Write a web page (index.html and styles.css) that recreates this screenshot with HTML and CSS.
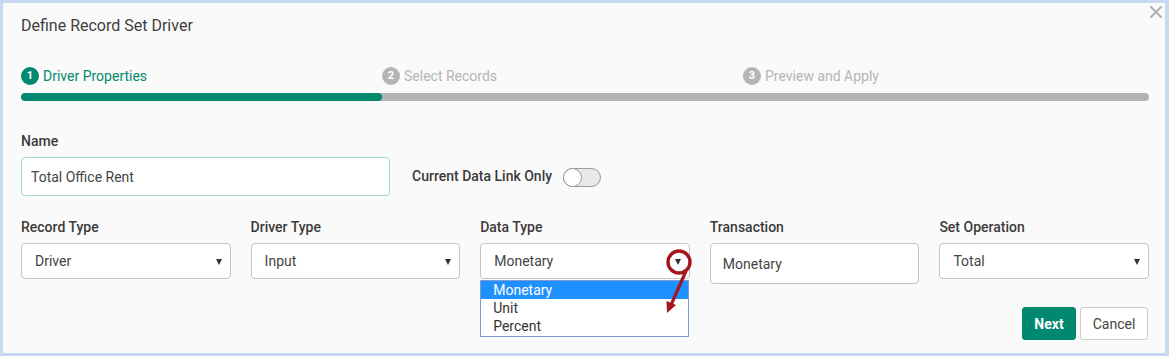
FILE: index.html
```html
<!DOCTYPE html>
<html lang="en">
<head>
  <meta charset="UTF-8">
  <title>Define Record Set Driver</title>
  <link rel="stylesheet" href="styles.css">
</head>
<body>
  <div class="dialog">
    <!-- Close button in the corner -->
    <button class="close-btn" aria-label="Close">
      <svg width="12" height="12" viewBox="0 0 12 12">
        <path d="M1 1 L11 11 M11 1 L1 11" stroke="#b3b3b3" stroke-width="2.2" stroke-linecap="round"/>
      </svg>
    </button>

    <h2 class="title">Define Record Set Driver</h2>

    <!-- Wizard steps -->
    <div class="steps">
      <div class="step active"><span class="step-num">1</span>Driver Properties</div>
      <div class="step"><span class="step-num">2</span>Select Records</div>
      <div class="step"><span class="step-num">3</span>Preview and Apply</div>
    </div>
    <div class="progress">
      <div class="progress-fill"></div>
    </div>

    <!-- Name row -->
    <div class="name-row">
      <div class="field name-field">
        <label class="field-label">Name</label>
        <input type="text" class="text-input name-input" value="Total Office Rent">
      </div>
      <span class="link-label">Current Data Link Only</span>
      <span class="toggle"><span class="toggle-knob"></span></span>
    </div>

    <!-- Driver settings -->
    <div class="settings-grid">
      <div class="field">
        <label class="field-label">Record Type</label>
        <div class="select-wrap">
          <select class="select-input"><option>Driver</option></select>
        </div>
      </div>
      <div class="field">
        <label class="field-label">Driver Type</label>
        <div class="select-wrap">
          <select class="select-input"><option>Input</option></select>
        </div>
      </div>
      <div class="field data-type">
        <label class="field-label">Data Type</label>
        <div class="select-wrap">
          <select class="select-input"><option>Monetary</option><option>Unit</option><option>Percent</option></select>
        </div>
        <ul class="option-list">
          <li class="selected">Monetary</li>
          <li>Unit</li>
          <li>Percent</li>
        </ul>
        <!-- Red callout over the dropdown arrow -->
        <svg class="callout" width="40" height="80" viewBox="0 0 40 80">
          <circle cx="19" cy="17" r="11" fill="none" stroke="#a3151f" stroke-width="3.4"/>
          <line x1="26" y1="26" x2="11" y2="60" stroke="#a3151f" stroke-width="3.2"/>
          <polygon points="7,68 16,60 6.5,56" fill="#a3151f"/>
        </svg>
      </div>
      <div class="field">
        <label class="field-label">Transaction</label>
        <input type="text" class="text-input trans-input" value="Monetary">
      </div>
      <div class="field">
        <label class="field-label">Set Operation</label>
        <div class="select-wrap">
          <select class="select-input"><option>Total</option></select>
        </div>
      </div>
    </div>

    <div class="actions">
      <button class="btn btn-primary">Next</button>
      <button class="btn btn-default">Cancel</button>
    </div>
  </div>
</body>
</html>
```

FILE: styles.css
```css
/* Page frame */
body {
  margin: 0;
  background: #c6d9f1;
  font-family: Roboto, "Liberation Sans", Arial, sans-serif;
  color: #333;
}

/* Dialog panel */
.dialog {
  position: relative;
  margin: 3px 4px 3px 3px;
  height: 350px;
  box-sizing: border-box;
  background: #fafafa;
  padding: 12px 16px 0 18px;
}

.close-btn {
  position: absolute;
  top: 3px;
  right: 3px;
  padding: 0;
  border: none;
  background: none;
  line-height: 0;
}

.title {
  margin: 0;
  font-size: 16px;
  line-height: 22px;
  font-weight: 400;
  color: #3f3f3f;
}

/* Wizard steps */
.steps {
  display: grid;
  grid-template-columns: 361px 361px 1fr;
  margin-top: 30px;
}
.step {
  display: flex;
  align-items: center;
  font-size: 14px;
  line-height: 18px;
  color: #b5b5b5;
}
.step-num {
  width: 18px;
  height: 18px;
  border-radius: 50%;
  background: #b5b5b5;
  color: #fff;
  font-size: 11px;
  font-weight: bold;
  display: flex;
  align-items: center;
  justify-content: center;
  margin-right: 4px;
}
.step.active {
  color: #00896f;
}
.step.active .step-num {
  background: #00896f;
}

.progress {
  margin-top: 8px;
  height: 8px;
  border-radius: 4px;
  background: #b3b3b3;
  overflow: hidden;
}
.progress-fill {
  width: 361px;
  height: 100%;
  border-radius: 4px;
  background: #00896f;
}

/* Fields */
.field {
  display: flex;
  flex-direction: column;
}
.field-label {
  font-size: 14px;
  line-height: 20px;
  font-weight: 500;
  color: #3a3a3a;
  margin-bottom: 6px;
}
.text-input,
.select-input {
  box-sizing: border-box;
  width: 100%;
  font-family: inherit;
  font-size: 14px;
  color: #444;
  background: #fff;
  border: 1px solid #c4c4c4;
  border-radius: 4px;
  outline: none;
}

/* Name row */
.name-row {
  display: flex;
  align-items: flex-end;
  margin-top: 30px;
}
.name-field {
  width: 369px;
}
.name-input {
  height: 39px;
  padding: 0 9px;
  border-color: #9fd9cb;
}
.link-label {
  margin-left: 22px;
  font-size: 14px;
  font-weight: 500;
  line-height: 39px;
  color: #3a3a3a;
}
.toggle {
  position: relative;
  width: 38px;
  height: 19px;
  margin: 0 0 9px 11px;
  box-sizing: border-box;
  border: 1px solid #9a9a9a;
  border-radius: 10px;
  background: #e8e8e8;
}
.toggle-knob {
  position: absolute;
  top: -1px;
  left: -1px;
  width: 19px;
  height: 19px;
  box-sizing: border-box;
  border: 1px solid #9a9a9a;
  border-radius: 50%;
  background: #fff;
}

/* Settings grid */
.settings-grid {
  display: grid;
  grid-template-columns: repeat(5, 1fr);
  column-gap: 20px;
  margin-top: 21px;
}
.select-wrap {
  position: relative;
}
.select-wrap::after {
  content: "";
  position: absolute;
  right: 9px;
  top: 16px;
  border-left: 3.5px solid transparent;
  border-right: 3.5px solid transparent;
  border-top: 6px solid #333;
}
.select-input {
  appearance: none;
  height: 36px;
  padding: 0 13px;
}
.trans-input {
  height: 41px;
  padding: 0 12px;
}

/* Open dropdown of Data Type */
.data-type {
  position: relative;
}
.option-list {
  position: absolute;
  top: 63px;
  left: 0;
  width: 209px;
  box-sizing: border-box;
  margin: 0;
  padding: 0 0 1px;
  list-style: none;
  background: #fff;
  border: 1px solid #7a9cd3;
}
.option-list li {
  height: 18px;
  line-height: 18px;
  padding-left: 12px;
  font-size: 14px;
  color: #333;
}
.option-list li.selected {
  background: #1e90ff;
  color: #fff;
}
.callout {
  position: absolute;
  left: 180px;
  top: 28px;
}

/* Buttons */
.actions {
  display: flex;
  justify-content: flex-end;
  gap: 4px;
  margin-top: 23px;
  padding-right: 1px;
}
.btn {
  height: 33px;
  border-radius: 3px;
  font-family: inherit;
  font-size: 14px;
  cursor: pointer;
}
.btn-primary {
  width: 54px;
  background: #00896f;
  border: 1px solid #00896f;
  color: #fff;
  font-weight: bold;
}
.btn-default {
  width: 68px;
  background: #fff;
  border: 1px solid #ccc;
  color: #444;
}
```
